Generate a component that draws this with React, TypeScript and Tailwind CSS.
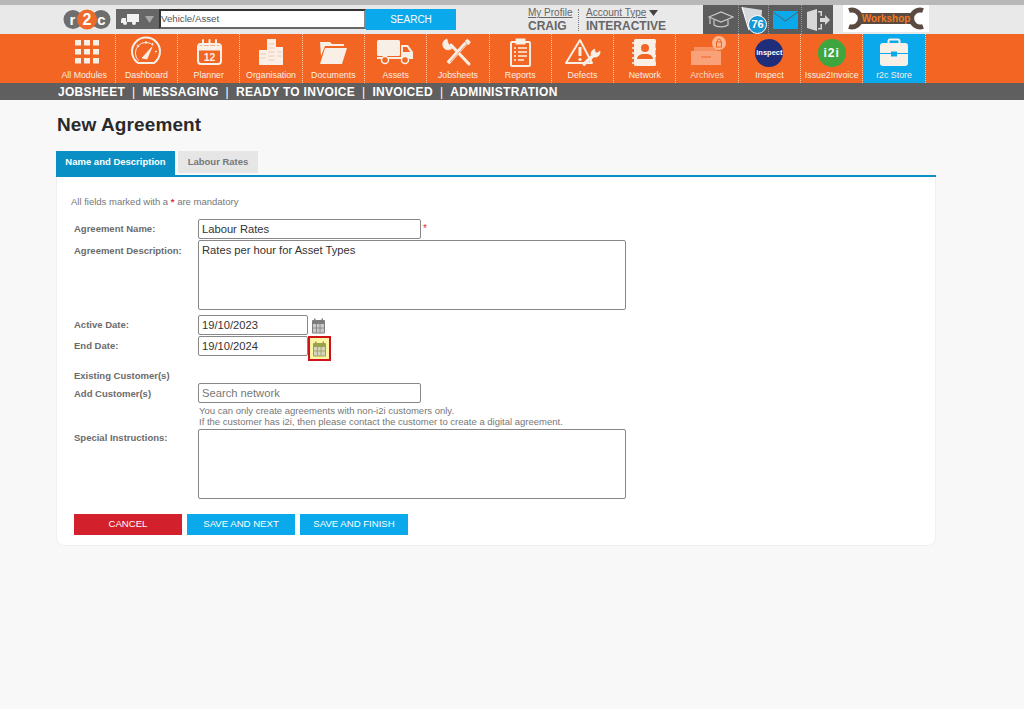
import type { ReactNode } from 'react'

const ICON = '#f8efe6'

function AllModulesIcon() {
  const cells = []
  for (let r = 0; r < 3; r++) {
    for (let c = 0; c < 3; c++) {
      cells.push(<rect key={`${r}-${c}`} x={9 + c * 9} y={4 + r * 9} width={6} height={5.5} fill={ICON} />)
    }
  }
  return <svg width="36" height="32" viewBox="0 0 36 32">{cells}</svg>
}

function DashboardIcon() {
  return (
    <svg width="36" height="32" viewBox="0 0 36 32" fill="none" stroke={ICON}>
      <path d="M10 27a14 14 0 1 1 16 0z" strokeWidth="2" strokeLinejoin="round" />
      <path d="M10.500 24.500a10.500 10.500 0 0 1 15 -15" strokeWidth="1" />
      <path d="M14 22 L24 11 L19 23z" fill={ICON} strokeWidth="0.8" />
      <path d="M27 16l2 -1M24 9l1 -2M18 8V5M11 11L9 9" strokeWidth="1.200" />
    </svg>
  )
}

function PlannerIcon() {
  return (
    <svg width="36" height="32" viewBox="0 0 36 32" fill="none" stroke={ICON}>
      <rect x="7" y="8" width="23" height="20" rx="3" strokeWidth="2" />
      <path d="M7 10h23v4H7z" fill={ICON} strokeWidth="1" />
      <path d="M12 4v6M25 4v6M18.500 4v5" strokeWidth="2" strokeLinecap="round" />
      <text x="18.500" y="25" textAnchor="middle" fontFamily="Liberation Sans, sans-serif" fontSize="10.500" fontWeight="700" fill={ICON} stroke="none">12</text>
    </svg>
  )
}

function OrganisationIcon() {
  return (
    <svg width="36" height="32" viewBox="0 0 36 32" fill={ICON}>
      <rect x="6" y="14" width="8" height="15" />
      <rect x="14" y="3" width="9" height="26" />
      <rect x="23" y="11" width="7" height="18" />
      <path d="M15.500 8h6M15.500 12h6M15.500 16h6M15.500 20h6M15.500 24h6" stroke="#f9bd9c" strokeWidth="0.8" />
      <path d="M7.500 18h5M7.500 22h5M24.500 16h4M24.500 20h4" stroke="#f9bd9c" strokeWidth="0.8" />
    </svg>
  )
}

function DocumentsIcon() {
  return (
    <svg width="36" height="32" viewBox="0 0 36 32" fill={ICON}>
      <path d="M5 6h10l2 2h12v2H10L6 20z" />
      <path d="M10 12h22l-5 16H5z" />
    </svg>
  )
}

function AssetsIcon() {
  return (
    <svg width="38" height="32" viewBox="0 0 38 32" fill={ICON}>
      <rect x="0" y="4" width="23" height="16" rx="1.500" />
      <path d="M24 9h7l5 7v6H24z" />
      <path d="M26 11h4l3 5h-7z" fill="#f26522" />
      <rect x="0" y="21" width="36" height="2" />
      <circle cx="8" cy="24" r="3.500" fill="#f26522" stroke={ICON} strokeWidth="1.500" />
      <circle cx="28" cy="24" r="3.500" fill="#f26522" stroke={ICON} strokeWidth="1.500" />
    </svg>
  )
}

function JobsheetsIcon() {
  return (
    <svg width="36" height="32" viewBox="0 0 36 32" fill="none" stroke={ICON}>
      <path d="M11 9l18 19" strokeWidth="3" strokeLinecap="round" />
      <path d="M7 3a5.500 5.500 0 1 0 6 8l-3-1-2-3z" fill={ICON} strokeWidth="0.6" />
      <path d="M8 27L26 7" strokeWidth="4" />
      <path d="M25 5l2.500-2 3 3-2 3z" fill={ICON} strokeWidth="0.5" />
      <path d="M10 26L26.500 8" stroke="#f26522" strokeWidth="0.6" />
    </svg>
  )
}

function ReportsIcon() {
  return (
    <svg width="36" height="32" viewBox="0 0 36 32" fill="none" stroke={ICON}>
      <rect x="9" y="6" width="19" height="24" rx="1" strokeWidth="2" />
      <rect x="14" y="3" width="9" height="5" fill={ICON} strokeWidth="1" />
      <path d="M12 12h2M16 12h9M12 16h2M16 16h9M12 20h2M16 20h9M12 24h2M16 24h6" strokeWidth="1.300" />
    </svg>
  )
}

function DefectsIcon() {
  return (
    <svg width="40" height="32" viewBox="0 0 40 32" fill="none" stroke={ICON}>
      <path d="M17 4L3 27h26z" strokeWidth="2" strokeLinejoin="round" />
      <path d="M17 11v9" strokeWidth="3" />
      <circle cx="17" cy="23.500" r="1.600" fill={ICON} stroke="none" />
      <path d="M20 29L32 18" strokeWidth="3.500" />
      <path d="M31 21a5 5 0 0 0 6-6l-3 2-2-1v-3a5 5 0 0 0-4 6z" fill={ICON} strokeWidth="0.5" />
    </svg>
  )
}

function NetworkIcon() {
  return (
    <svg width="36" height="32" viewBox="0 0 36 32" fill={ICON}>
      <rect x="7" y="3" width="22" height="27" rx="1.500" />
      <circle cx="18" cy="12" r="4" fill="#f26522" />
      <path d="M10 23c1-5 5-5 8-5s7 0 8 5z" fill="#f26522" />
      <path d="M5 7h4M5 12h4M5 17h4M5 22h4M5 27h4" stroke={ICON} strokeWidth="1.500" />
      <path d="M29 7v5M29 14v5M29 21v5" stroke="#f26522" strokeWidth="1" />
    </svg>
  )
}

function ArchivesIcon() {
  return (
    <svg width="40" height="32" viewBox="0 0 40 32" fill="#f9a27a">
      <path d="M7 11h23v5H7z" opacity="0.7" />
      <path d="M4 15h30v14H4z" />
      <path d="M14 21h10" stroke="#f26522" strokeWidth="1" />
      <circle cx="32" cy="7" r="7" fill="#fbb694" />
      <rect x="29.500" y="6" width="5" height="5" fill="none" stroke="#f26522" strokeWidth="1" />
      <path d="M30.500 6V4.500a1.500 1.500 0 0 1 3 0V6" fill="none" stroke="#f26522" strokeWidth="1" />
    </svg>
  )
}

function StoreIcon() {
  return (
    <svg width="36" height="32" viewBox="0 0 36 32" fill={ICON}>
      <path d="M12.500 8V5a1.500 1.500 0 0 1 1.500-1.500h8a1.500 1.500 0 0 1 1.500 1.500v3" fill="none" stroke={ICON} strokeWidth="2" />
      <path d="M7 7h22a3 3 0 0 1 3 3v7H21v-1.500h-6V17H4v-7a3 3 0 0 1 3-3z" />
      <path d="M4 18h11v2.500h6V18h11v9a3 3 0 0 1-3 3H7a3 3 0 0 1-3-3z" />
    </svg>
  )
}

function InspectBadge() {
  return (
    <div className="w-[28px] h-[28px] rounded-full bg-[#1f2d7a] flex items-center justify-center mt-[3px]">
      <span className="text-[7.5px] font-bold text-white leading-none">inspect</span>
    </div>
  )
}

function I2iBadge() {
  return (
    <div className="w-[28px] h-[28px] rounded-full bg-[#3fa53f] flex items-center justify-center mt-[3px]">
      <span className="text-[12px] font-bold text-white leading-none tracking-[1px]">i2i</span>
    </div>
  )
}

function CalendarIcon({ color = '#7d7d7d' }: { color?: string }) {
  return (
    <svg width="15" height="16" viewBox="0 0 15 16">
      <rect x="1" y="2" width="13" height="13.500" rx="1" fill={color} />
      <rect x="3" y="0.500" width="1.500" height="3" fill={color} />
      <rect x="10.500" y="0.500" width="1.500" height="3" fill={color} />
      <rect x="2" y="6" width="11" height="8.500" fill="#e4e4e4" opacity="0.75" />
      <path d="M5.500 6v8.500M9 6v8.500M2 10h11" stroke={color} strokeWidth="0.8" />
    </svg>
  )
}

function CapIcon() {
  return (
    <svg width="26" height="20" viewBox="0 0 26 20" fill="none" stroke="#c9c9c9" strokeWidth="1.200">
      <path d="M1 7l12-5 12 5-12 5z" />
      <path d="M6 10v5c3 2.500 11 2.500 14 0v-5" />
      <path d="M2 8v6" />
    </svg>
  )
}

function FlagIcon() {
  return (
    <div className="relative w-[27px] h-[28px]">
      <svg width="24" height="26" viewBox="0 0 24 26" fill="#d6dadc">
        <path d="M2 1l20 3-1 15-11 5z" />
        <path d="M2 1l7 23" stroke="#fff" strokeWidth="1.200" />
      </svg>
      <span className="absolute right-0 bottom-0 w-[19px] h-[19px] rounded-full bg-[#1597d5] border border-white text-white text-[11px] font-bold leading-[17px] text-center">76</span>
    </div>
  )
}

function MailIcon() {
  return (
    <svg width="25" height="18" viewBox="0 0 25 18">
      <rect width="25" height="18" fill="#0aa9ec" />
      <path d="M0 1l12.500 9L25 1" fill="none" stroke="#5c5c5c" strokeWidth="1" />
    </svg>
  )
}

function DoorIcon() {
  return (
    <svg width="26" height="24" viewBox="0 0 26 24" fill="#d8d8d8">
      <path d="M2 4l10-3v22L2 20z" />
      <path d="M13 3h4v5h-1.500V4.500H13zM13 16h2.500v4H13v1.500h4V16z" />
      <path d="M15 10h5V7l5 5-5 5v-3h-5z" />
    </svg>
  )
}

function WorkshopLogo() {
  return (
    <div className="relative w-[86px] h-[27px] bg-white flex items-center justify-center">
      <svg width="86" height="27" viewBox="0 0 86 27" className="absolute inset-0" fill="none" stroke="#5b4a42">
        <path d="M6 5.500a8.500 8.500 0 1 1 0 16" strokeWidth="5" />
        <path d="M80 5.500a8.500 8.500 0 1 0 0 16" strokeWidth="5" />
        <rect x="17" y="8" width="52" height="11" fill="#5b4a42" stroke="none" />
      </svg>
      <span className="relative text-[10px] font-bold text-[#ef7a22] leading-none">Workshop</span>
    </div>
  )
}

const NAV: { label: string; icon: ReactNode; active?: boolean; dim?: boolean }[] = [
  { label: 'All Modules', icon: <AllModulesIcon /> },
  { label: 'Dashboard', icon: <DashboardIcon /> },
  { label: 'Planner', icon: <PlannerIcon /> },
  { label: 'Organisation', icon: <OrganisationIcon /> },
  { label: 'Documents', icon: <DocumentsIcon /> },
  { label: 'Assets', icon: <AssetsIcon /> },
  { label: 'Jobsheets', icon: <JobsheetsIcon /> },
  { label: 'Reports', icon: <ReportsIcon /> },
  { label: 'Defects', icon: <DefectsIcon /> },
  { label: 'Network', icon: <NetworkIcon /> },
  { label: 'Archives', icon: <ArchivesIcon />, dim: true },
  { label: 'Inspect', icon: <InspectBadge /> },
  { label: 'Issue2Invoice', icon: <I2iBadge /> },
  { label: 'r2c Store', icon: <StoreIcon />, active: true },
]

const SUBNAV = ['JOBSHEET', 'MESSAGING', 'READY TO INVOICE', 'INVOICED', 'ADMINISTRATION']

function Header() {
  return (
    <>
      <div className="h-[5px] bg-[#b8b8b8]" />
      <div className="h-[29px] bg-[#e9e9e9] flex items-start pl-[62px]">
        <svg width="49" height="21" viewBox="0 0 49 21" className="mt-[4px]">
          <circle cx="11" cy="10.500" r="9.500" fill="#6e6e6e" />
          <circle cx="39" cy="10.500" r="9.500" fill="#6e6e6e" />
          <circle cx="25" cy="10.500" r="10" fill="#ee6a2a" />
          <text x="10.500" y="15.500" textAnchor="middle" fontFamily="Liberation Sans, sans-serif" fontSize="15" fontWeight="700" fill="#fff">r</text>
          <text x="25" y="16" textAnchor="middle" fontFamily="Liberation Sans, sans-serif" fontSize="16" fontWeight="700" fill="#fff">2</text>
          <text x="39.500" y="15.500" textAnchor="middle" fontFamily="Liberation Sans, sans-serif" fontSize="15" fontWeight="700" fill="#fff">c</text>
        </svg>
        <div className="ml-[5px] mt-[4px] w-[43px] h-[20px] bg-[#666] flex items-center pl-[5px] gap-[6px]">
          <svg width="18" height="11" viewBox="0 0 18 11" fill="#f2f2f2">
            <rect x="6" y="0" width="12" height="8" />
            <path d="M1 4h4v5H0V6z" />
            <circle cx="4" cy="9" r="2" />
            <circle cx="13" cy="9" r="2" />
          </svg>
          <svg width="9" height="7" viewBox="0 0 9 7" fill="#a8a8a8"><path d="M0 0h9L4.500 7z" /></svg>
        </div>
        <div className="mt-[4px] w-[207px] h-[20px] bg-white border-2 border-[#333] border-b-[#666] border-r-[#888] text-[9.7px] leading-[15px] text-[#555]">Vehicle/Asset</div>
        <div className="mt-[4px] w-[90px] h-[21px] bg-[#0aa9ec] text-white text-[10px] leading-[21px] text-center">SEARCH</div>
        <div className="ml-[72px] mt-[1px] w-[50px] text-[#666] leading-none">
          <div className="text-[10px] underline mt-[2px]">My Profile</div>
          <div className="text-[12px] font-bold mt-[2px]">CRAIG</div>
        </div>
        <div className="mt-[4px] h-[22px] border-l border-dotted border-[#777]" />
        <div className="ml-[7px] mt-[1px] w-[117px] text-[#666] leading-none">
          <div className="text-[10px] mt-[2px] flex items-center gap-[3px]">
            <span className="underline">Account Type</span>
            <svg width="9" height="6" viewBox="0 0 9 6" fill="#444"><path d="M0 0h9L4.500 6z" /></svg>
          </div>
          <div className="text-[12px] font-bold mt-[2px]">INTERACTIVE</div>
        </div>
        <div className="h-[29px] w-[130px] bg-[#5c5c5c] flex items-center">
          <div className="w-[36px] flex justify-center border-r border-dotted border-[#999] h-full items-center"><CapIcon /></div>
          <div className="w-[30px] flex justify-center border-r border-dotted border-[#999] h-full items-center"><FlagIcon /></div>
          <div className="w-[33px] flex justify-center border-r border-dotted border-[#999] h-full items-center"><MailIcon /></div>
          <div className="w-[31px] flex justify-center h-full items-center"><DoorIcon /></div>
        </div>
        <div className="ml-[10px]"><WorkshopLogo /></div>
      </div>
      <div className="h-[49px] bg-[#f26522] flex pl-[53.5px]">
        {NAV.map((n) => (
          <div
            key={n.label}
            className={`w-[62.3px] h-full flex flex-col items-center border-r border-dotted border-[#f9c9a8] ${n.active ? 'bg-[#0aa9ec]' : ''}`}
          >
            <div className="h-[35px] pt-[2px] flex justify-center items-start">{n.icon}</div>
            <span className={`text-[8.8px] leading-[12px] whitespace-nowrap ${n.dim ? 'text-[#fbd9c4]' : 'text-[#fdeee3]'}`}>{n.label}</span>
          </div>
        ))}
      </div>
      <div className="h-[17px] bg-[#5f5f5f] flex items-center pl-[58px] text-white text-[12px] font-bold tracking-[0.3px] leading-none">
        {SUBNAV.map((s, i) => (
          <span key={s} className="whitespace-nowrap">
            {i > 0 && <span className="font-normal mx-[7px]">|</span>}
            {s}
          </span>
        ))}
      </div>
    </>
  )
}

function Label({ children }: { children: ReactNode }) {
  return <div className="w-[124px] shrink-0 text-[9.5px] font-bold text-[#6b6b6b] leading-none">{children}</div>
}

const FIELD = 'border border-[#888] rounded-[2px] bg-white px-[3px] text-[11.2px] text-[#333] leading-none'

function Form() {
  return (
    <div className="w-[880px] h-[369px] ml-[56px] bg-white rounded-b-[8px] border border-t-0 border-[#efefef] pl-[14px] pt-[19px]">
      <p className="text-[9.5px] text-[#777] leading-[12px]">
        All fields marked with a <span className="text-[#e03030] font-bold">*</span> are mandatory
      </p>
      <div className="pl-[3px] mt-[11px]">
        <div className="flex h-[20px]">
          <div className="pt-[5px]"><Label>Agreement Name:</Label></div>
          <div className={`${FIELD} w-[223px] h-[20px] flex items-center pt-[2px]`}>Labour Rates</div>
          <span className="ml-[2px] text-[10px] text-[#e03030] leading-[20px]">*</span>
        </div>
        <div className="flex mt-[1px]">
          <div className="pt-[6px]"><Label>Agreement Description:</Label></div>
          <div className={`${FIELD} w-[428px] h-[70px] pt-[4px]`}>Rates per hour for Asset Types</div>
        </div>
        <div className="flex mt-[5px] h-[20px]">
          <div className="pt-[5px]"><Label>Active Date:</Label></div>
          <div className={`${FIELD} w-[110px] h-[20px] flex items-center pt-[2px]`}>19/10/2023</div>
          <div className="ml-[3px] mt-[3px]"><CalendarIcon /></div>
        </div>
        <div className="flex mt-[1px] h-[25px]">
          <div className="pt-[5px]"><Label>End Date:</Label></div>
          <div className={`${FIELD} w-[110px] h-[20px] flex items-center pt-[2px]`}>19/10/2024</div>
          <div className="w-[23px] h-[25px] border-[2px] border-[#d0141c] bg-[#fbf5a5] flex items-center justify-center">
            <CalendarIcon color="#9aa24c" />
          </div>
        </div>
        <div className="mt-[10px]"><Label>Existing Customer(s)</Label></div>
        <div className="flex mt-[2px] h-[20px]">
          <div className="pt-[6px]"><Label>Add Customer(s)</Label></div>
          <div className={`${FIELD} w-[223px] h-[20px] flex items-center pt-[2px] text-[#777]`}>Search network</div>
        </div>
        <div className="pl-[125px] pt-[2px] text-[9.5px] leading-[11px] text-[#777]">
          <p>You can only create agreements with non-i2i customers only.</p>
          <p>If the customer has i2i, then please contact the customer to create a digital agreement.</p>
        </div>
        <div className="flex mt-[2px]">
          <div className="pt-[4px]"><Label>Special Instructions:</Label></div>
          <div className={`${FIELD} w-[428px] h-[70px]`} />
        </div>
        <div className="flex mt-[15px] gap-[5px] text-[9.6px] text-white">
          <button className="w-[108px] h-[21px] bg-[#d2202c]">CANCEL</button>
          <button className="w-[108px] h-[21px] bg-[#0aa9ec]">SAVE AND NEXT</button>
          <button className="w-[108px] h-[21px] bg-[#0aa9ec]">SAVE AND FINISH</button>
        </div>
      </div>
    </div>
  )
}

export default function App() {
  return (
    <div className="h-[709px] overflow-hidden bg-[#f8f8f8] font-['Liberation_Sans',Arial,sans-serif]">
      <Header />
      <h1 className="ml-[57px] mt-[14px] text-[19px] font-bold text-[#2a2a2a] leading-[22px] tracking-[0.1px]">New Agreement</h1>
      <div className="ml-[56px] mt-[15px] w-[880px] h-[26px] flex items-start border-b-2 border-[#0a8fc4]">
        <div className="w-[119px] h-[24px] bg-[#0a8fc4] text-white text-[9.5px] font-bold leading-[21px] text-center">Name and Description</div>
        <div className="ml-[3px] w-[80px] h-[22px] bg-[#e6e6e6] text-[#777] text-[9.5px] font-bold leading-[21px] text-center">Labour Rates</div>
      </div>
      <Form />
    </div>
  )
}
